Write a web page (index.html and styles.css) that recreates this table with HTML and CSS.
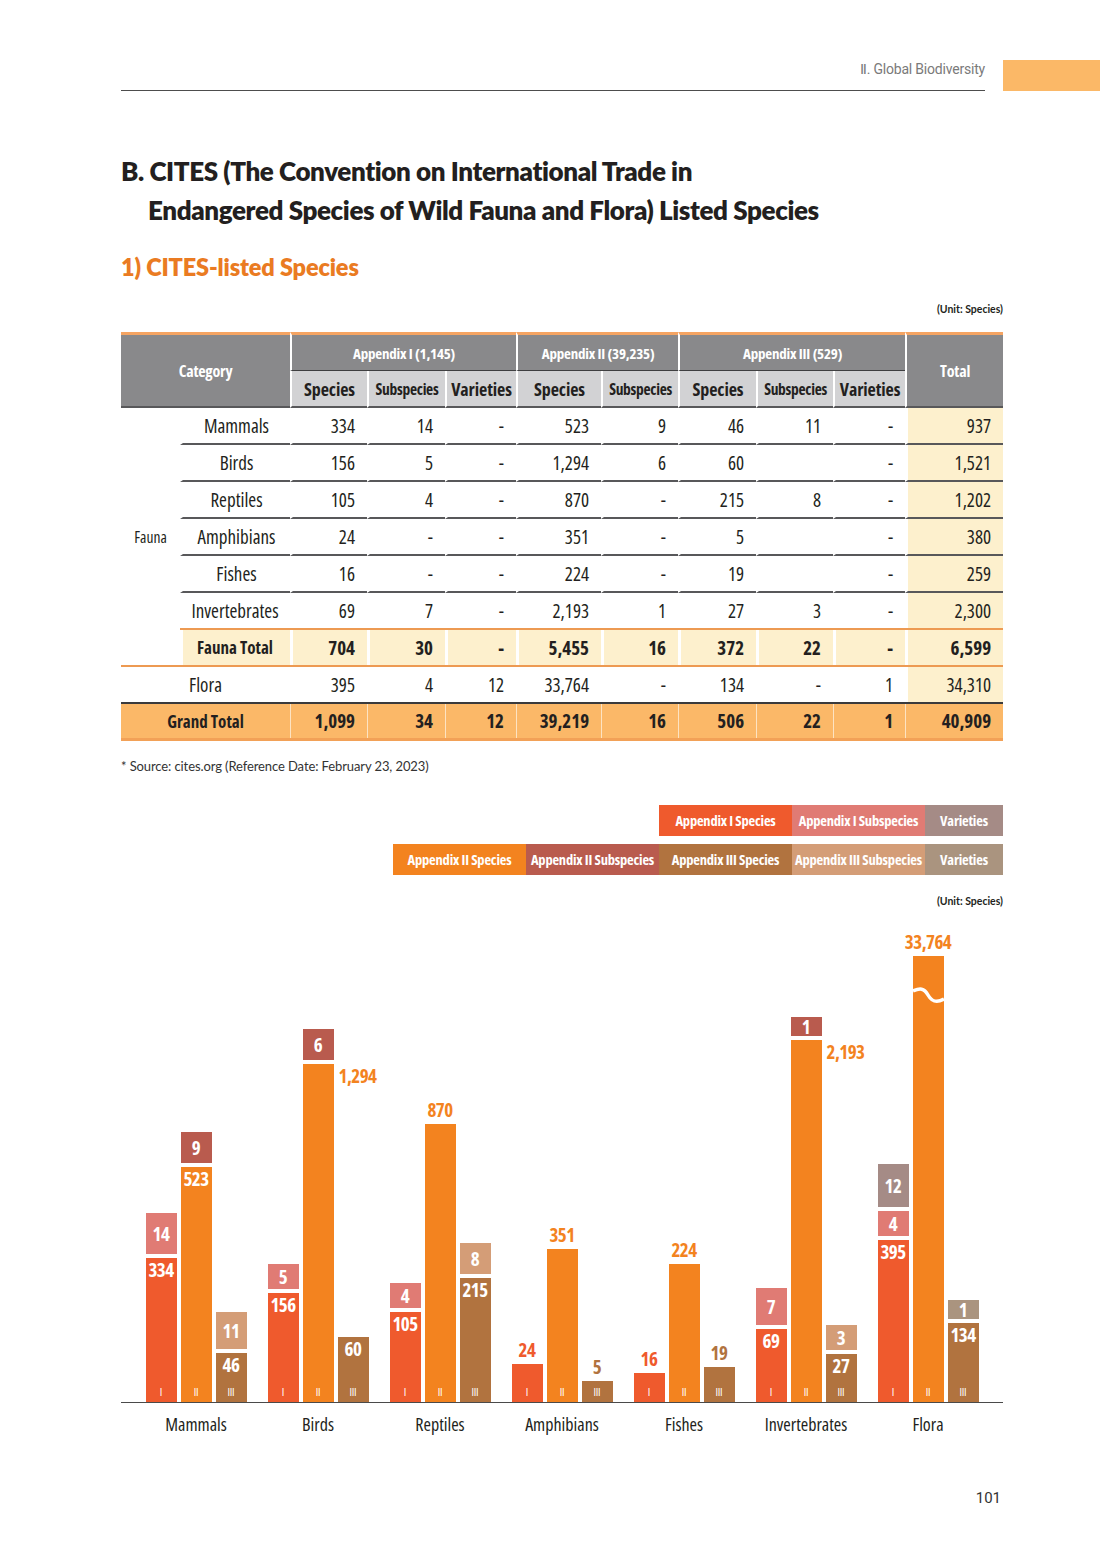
FILE: index.html
```html
<!DOCTYPE html>
<html lang="en">
<head>
<meta charset="utf-8">
<title>CITES-listed Species</title>
<link rel="stylesheet" href="styles.css">
</head>
<body>
<div class="page">
  <header class="running">
    <div class="running-rule"><span>Ⅱ. Global Biodiversity</span></div>
    <div class="tab"></div>
  </header>

  <h1 class="title"><span class="l1">B. CITES (The Convention on International Trade in</span><span class="l2">Endangered Species of Wild Fauna and Flora) Listed Species</span></h1>
  <h2 class="sub">1) CITES-listed Species</h2>

  <div class="unit">(Unit: Species)</div>

  <table class="cites">
    <colgroup>
      <col class="c-fauna"><col class="c-name"><col class="c-s1"><col class="c-ss1"><col class="c-v1"><col class="c-s2"><col class="c-ss2"><col class="c-s3"><col class="c-ss3"><col class="c-v3"><col class="c-tot">
    </colgroup>
    <thead>
      <tr class="h1">
        <th colspan="2" rowspan="2" class="cat first">Category</th>
        <th colspan="3" class="grp">Appendix I (1,145)</th>
        <th colspan="2" class="grp">Appendix II (39,235)</th>
        <th colspan="3" class="grp">Appendix III (529)</th>
        <th rowspan="2" class="cat">Total</th>
      </tr>
      <tr class="h2">
        <th>Species</th><th class="ssp">Subspecies</th><th>Varieties</th>
        <th>Species</th><th class="ssp">Subspecies</th>
        <th>Species</th><th class="ssp">Subspecies</th><th>Varieties</th>
      </tr>
    </thead>
    <tbody>
      <tr><td rowspan="7" class="fauna">Fauna</td><td class="nm">Mammals</td><td>334</td><td>14</td><td>-</td><td>523</td><td>9</td><td>46</td><td>11</td><td>-</td><td class="tc">937</td></tr>
      <tr><td class="nm">Birds</td><td>156</td><td>5</td><td>-</td><td>1,294</td><td>6</td><td>60</td><td></td><td>-</td><td class="tc">1,521</td></tr>
      <tr><td class="nm">Reptiles</td><td>105</td><td>4</td><td>-</td><td>870</td><td>-</td><td>215</td><td>8</td><td>-</td><td class="tc">1,202</td></tr>
      <tr><td class="nm">Amphibians</td><td>24</td><td>-</td><td>-</td><td>351</td><td>-</td><td>5</td><td></td><td>-</td><td class="tc">380</td></tr>
      <tr><td class="nm">Fishes</td><td>16</td><td>-</td><td>-</td><td>224</td><td>-</td><td>19</td><td></td><td>-</td><td class="tc">259</td></tr>
      <tr class="inv"><td class="nm">Invertebrates</td><td>69</td><td>7</td><td>-</td><td>2,193</td><td>1</td><td>27</td><td>3</td><td>-</td><td class="tc">2,300</td></tr>
      <tr class="ft"><td class="nm">Fauna Total</td><td>704</td><td>30</td><td>-</td><td>5,455</td><td>16</td><td>372</td><td>22</td><td>-</td><td class="tc">6,599</td></tr>
      <tr class="fl"><td colspan="2" class="nm">Flora</td><td>395</td><td>4</td><td>12</td><td>33,764</td><td>-</td><td>134</td><td>-</td><td>1</td><td class="tc">34,310</td></tr>
      <tr class="gt"><td colspan="2" class="nm">Grand Total</td><td>1,099</td><td>34</td><td>12</td><td>39,219</td><td>16</td><td>506</td><td>22</td><td>1</td><td class="tc">40,909</td></tr>
    </tbody>
  </table>

  <p class="source">* Source: cites.org (Reference Date: February 23, 2023)</p>

  <div class="legend">
    <div class="legend-row">
      <span class="lg k-s1">Appendix I Species</span>
      <span class="lg k-ss1">Appendix I Subspecies</span>
      <span class="lg k-v1 narrow">Varieties</span>
    </div>
    <div class="legend-row">
      <span class="lg k-s2">Appendix II Species</span>
      <span class="lg k-ss2">Appendix II Subspecies</span>
      <span class="lg k-s3">Appendix III Species</span>
      <span class="lg k-ss3">Appendix III Subspecies</span>
      <span class="lg k-v3 narrow">Varieties</span>
    </div>
  </div>

  <div class="unit unit2">(Unit: Species)</div>

  <div class="chart">
    <div class="plot">
      <!-- Mammals -->
      <div class="group">
        <div class="col"><div class="box k-ss1" style="height:41px">14</div><div class="bar k-s1" style="height:144px"><span class="v">334</span><span class="rn">I</span></div></div>
        <div class="col"><div class="box k-ss2" style="height:31px">9</div><div class="bar k-s2" style="height:235px"><span class="v">523</span><span class="rn">II</span></div></div>
        <div class="col"><div class="box k-ss3" style="height:37px">11</div><div class="bar k-s3" style="height:49px"><span class="v">46</span><span class="rn">III</span></div></div>
      </div>
      <!-- Birds -->
      <div class="group">
        <div class="col"><div class="box k-ss1" style="height:25px">5</div><div class="bar k-s1" style="height:109px"><span class="v">156</span><span class="rn">I</span></div></div>
        <div class="col"><div class="box k-ss2" style="height:31px">6</div><div class="bar k-s2" style="height:338px"><span class="side t-s2">1,294</span><span class="v"></span><span class="rn">II</span></div></div>
        <div class="col"><div class="bar k-s3" style="height:65px"><span class="v">60</span><span class="rn">III</span></div></div>
      </div>
      <!-- Reptiles -->
      <div class="group">
        <div class="col"><div class="box k-ss1" style="height:25px">4</div><div class="bar k-s1" style="height:90px"><span class="v">105</span><span class="rn">I</span></div></div>
        <div class="col"><span class="out t-s2">870</span><div class="bar k-s2" style="height:278px"><span class="v"></span><span class="rn">II</span></div></div>
        <div class="col"><div class="box k-ss3" style="height:31px">8</div><div class="bar k-s3" style="height:124px"><span class="v">215</span><span class="rn">III</span></div></div>
      </div>
      <!-- Amphibians -->
      <div class="group">
        <div class="col"><span class="out t-s1">24</span><div class="bar k-s1" style="height:38px"><span class="v"></span><span class="rn">I</span></div></div>
        <div class="col"><span class="out t-s2">351</span><div class="bar k-s2" style="height:153px"><span class="v"></span><span class="rn">II</span></div></div>
        <div class="col"><span class="out t-s3">5</span><div class="bar k-s3" style="height:21px"><span class="v"></span><span class="rn">III</span></div></div>
      </div>
      <!-- Fishes -->
      <div class="group">
        <div class="col"><span class="out t-s1">16</span><div class="bar k-s1" style="height:29px"><span class="v"></span><span class="rn">I</span></div></div>
        <div class="col"><span class="out t-s2">224</span><div class="bar k-s2" style="height:138px"><span class="v"></span><span class="rn">II</span></div></div>
        <div class="col"><span class="out t-s3">19</span><div class="bar k-s3" style="height:35px"><span class="v"></span><span class="rn">III</span></div></div>
      </div>
      <!-- Invertebrates -->
      <div class="group">
        <div class="col"><div class="box k-ss1" style="height:37px">7</div><div class="bar k-s1" style="height:73px"><span class="v">69</span><span class="rn">I</span></div></div>
        <div class="col"><div class="box k-ss2" style="height:19px">1</div><div class="bar k-s2" style="height:362px"><span class="side t-s2">2,193</span><span class="v"></span><span class="rn">II</span></div></div>
        <div class="col"><div class="box k-ss3" style="height:25px">3</div><div class="bar k-s3" style="height:48px"><span class="v">27</span><span class="rn">III</span></div></div>
      </div>
      <!-- Flora -->
      <div class="group">
        <div class="col"><div class="box k-v1" style="height:43px">12</div><div class="box k-ss1" style="height:25px">4</div><div class="bar k-s1" style="height:162px"><span class="v">395</span><span class="rn">I</span></div></div>
        <div class="col"><span class="out t-s2">33,764</span><div class="bar k-s2" style="height:446px"><svg class="brk" width="31" height="18" viewBox="0 0 31 18"><path d="M0 4 C 7 1, 11 1, 15 8 S 24 16, 31 12" fill="none" stroke="#fff" stroke-width="3.5"/></svg><span class="v"></span><span class="rn">II</span></div></div>
        <div class="col"><div class="box k-v3" style="height:19px">1</div><div class="bar k-s3" style="height:79px"><span class="v">134</span><span class="rn">III</span></div></div>
      </div>
    </div>
    <div class="cats">
      <span>Mammals</span><span>Birds</span><span>Reptiles</span><span>Amphibians</span><span>Fishes</span><span>Invertebrates</span><span>Flora</span>
    </div>
  </div>

  <div class="pageno">101</div>
</div>
</body>
</html>
```

FILE: styles.css
```css
:root {
  --c-s1: #ef5a2d;
  --c-ss1: #e07b74;
  --c-v1: #a58b86;
  --c-s2: #f3831f;
  --c-ss2: #b95b4e;
  --c-s3: #b1733f;
  --c-ss3: #d49d77;
  --c-v3: #aa947f;
}

* { box-sizing: border-box; margin: 0; padding: 0; }

html, body { background: #fff; }

body {
  width: 1100px;
  height: 1554px;
  overflow: hidden;
  font-family: "Lato", "Open Sans", sans-serif;
  color: #231f20;
}

.page {
  padding: 60px 97px 0 121px;
  height: 1554px;
}

/* running header */
.running {
  display: flex;
  height: 31px;
  margin-right: -97px;
}
.running-rule {
  flex: 1;
  border-bottom: 1px solid #4d4d4d;
  display: flex;
  justify-content: flex-end;
  align-items: flex-end;
  padding-bottom: 14px;
  font-family: "Roboto", sans-serif;
  font-size: 14px;
  line-height: 14px;
  color: #7a7a7a;
  letter-spacing: -0.2px;
}
.tab {
  width: 97px;
  margin-left: 18px;
  background: #fbb867;
}

/* titles */
.title {
  margin-top: 61px;
  font-family: "Lato", sans-serif;
  font-weight: 800;
  font-size: 26px;
  line-height: 39px;
  letter-spacing: -0.4px;
  color: #231f20;
}
.title span { display: block; }
.title .l2 { padding-left: 27px; }

.sub {
  margin-top: 22px;
  font-family: "Lato", sans-serif;
  font-weight: 800;
  font-size: 23.5px;
  line-height: 30px;
  letter-spacing: -0.15px;
  color: #ea7b22;
}

.unit {
  margin-top: 20px;
  text-align: right;
  font-family: "Lato", sans-serif;
  font-weight: 700;
  font-size: 10.5px;
  line-height: 14px;
  color: #231f20;
}

/* table */
.cites {
  margin-top: 16px;
  width: 882px;
  table-layout: fixed;
  border-collapse: separate;
  border-spacing: 0;
  font-family: "Open Sans", sans-serif;
  font-stretch: 75%;
  color: #231f20;
}
.c-fauna { width: 59px; }
.c-name { width: 110px; }
.c-s1 { width: 77px; }
.c-ss1 { width: 78px; }
.c-v1 { width: 71px; }
.c-s2 { width: 85px; }
.c-ss2 { width: 77px; }
.c-s3 { width: 78px; }
.c-ss3 { width: 77px; }
.c-v3 { width: 72px; }
.c-tot { width: 98px; }

.cites th {
  font-weight: 700;
  text-align: center;
  padding: 0;
  border-left: 2px solid #fff;
  white-space: nowrap;
}
.cites th.first { border-left: 0; }
.h1 th {
  height: 39px;
  border-top: 3px solid #f5a462;
  background: #89898b;
  color: #fff;
  font-size: 15px;
  letter-spacing: -0.2px;
}
.h1 th.grp { border-bottom: 1px solid #3e3e40; }
.h1 th.cat { border-bottom: 2px solid #58585a; font-size: 16px; }
.h2 th {
  height: 37px;
  background: #d2d2d4;
  color: #231f20;
  font-size: 18px;
  letter-spacing: -0.1px;
  border-bottom: 2px solid #58585a;
}
.h2 th.ssp { font-size: 15.5px; letter-spacing: -0.3px; }

.cites td {
  height: 37px;
  padding: 0 12px 0 0;
  text-align: right;
  font-size: 19px;
  font-weight: 400;
  border-left: 3px solid #fff;
  border-bottom: 2px solid #58585a;
  white-space: nowrap;
}
.cites td.nm {
  text-align: center;
  padding: 0;
}
.cites td.fauna {
  border-left: 0;
  text-align: center;
  padding: 0;
  font-size: 15.5px;
  border-bottom: 2px solid #ed9a52;
}
.cites td.tc { background: #fdf0cd; }

.cites tr.inv td {
  border-left: 0;
  box-shadow: inset 3px 0 0 #fff;
  border-bottom: 2px solid #ed9a52;
}
.cites tr.ft td {
  border-left: 0;
  box-shadow: inset 3px 0 0 #fff;
  background: #fdf0cd;
  font-weight: 700;
  border-bottom: 2px solid #ed9a52;
}
.cites tr.fl td {
  border-left: 0;
  box-shadow: inset 3px 0 0 #fff;
  border-bottom: 2px solid #3a3a3c;
}
.cites tr.gt td {
  border-left: 0;
  box-shadow: inset 1px 0 0 #fde3c2;
  background: #fbb868;
  font-weight: 700;
  border-bottom: 3px solid #f2a157;
}
.cites tr.gt td.nm { box-shadow: none; font-size: 17px; }
.cites tr.ft td.nm { font-size: 17px; }

.source {
  margin-top: 17px;
  font-family: "Lato", sans-serif;
  font-size: 13px;
  line-height: 16px;
  color: #333;
  letter-spacing: -0.1px;
}

/* legend */
.legend {
  margin-top: 31px;
  display: flex;
  flex-direction: column;
  align-items: flex-end;
  gap: 8px;
}
.legend-row { display: flex; }
.lg {
  width: 133px;
  height: 31px;
  display: flex;
  align-items: center;
  justify-content: center;
  color: #fff;
  font-family: "Open Sans", sans-serif;
  font-stretch: 75%;
  font-weight: 700;
  font-size: 14.5px;
  letter-spacing: -0.2px;
  white-space: nowrap;
  overflow: hidden;
}
.lg.narrow { width: 78px; }

.k-s1 { background: var(--c-s1); }
.k-ss1 { background: var(--c-ss1); }
.k-v1 { background: var(--c-v1); }
.k-s2 { background: var(--c-s2); }
.k-ss2 { background: var(--c-ss2); }
.k-s3 { background: var(--c-s3); }
.k-ss3 { background: var(--c-ss3); }
.k-v3 { background: var(--c-v3); }
.t-s1 { color: var(--c-s1); }
.t-s2 { color: var(--c-s2); }
.t-s3 { color: var(--c-s3); }

.unit2 { margin-top: 19px; }

/* chart */
.chart { margin-top: 24px; }
.plot {
  height: 471px;
  border-bottom: 1px solid #4a4a4a;
  display: flex;
  align-items: flex-end;
  padding: 0 14px;
}
.group {
  width: 122px;
  display: flex;
  justify-content: center;
  align-items: flex-end;
  gap: 4px;
}
.col {
  width: 31px;
  display: flex;
  flex-direction: column;
  align-items: center;
  gap: 4px;
}
.box, .bar, .out {
  font-family: "Open Sans", sans-serif;
  font-stretch: 75%;
  font-weight: 700;
}
.box, .bar {
  width: 31px;
  color: #fff;
}
.box {
  display: flex;
  align-items: center;
  justify-content: center;
  font-size: 19px;
  letter-spacing: -0.3px;
}
.bar {
  position: relative;
  display: flex;
  flex-direction: column;
  align-items: center;
  justify-content: space-between;
}
.bar .v {
  font-size: 19px;
  line-height: 20px;
  padding-top: 2px;
  letter-spacing: -0.5px;
  white-space: nowrap;
}
.bar .rn {
  font-size: 11.5px;
  line-height: 12px;
  padding-bottom: 4px;
  font-weight: 500;
  letter-spacing: -0.3px;
}
.out {
  font-size: 19px;
  line-height: 20px;
  letter-spacing: -0.5px;
  white-space: nowrap;
}
.side {
  position: absolute;
  left: 36px;
  top: 2px;
  font-size: 19px;
  line-height: 20px;
  letter-spacing: -0.5px;
  white-space: nowrap;
}
.brk {
  position: absolute;
  left: 0;
  top: 31px;
}

.cats {
  display: flex;
  padding: 0 14px;
  margin-top: 11px;
}
.cats span {
  width: 122px;
  text-align: center;
  font-family: "Open Sans", sans-serif;
  font-stretch: 75%;
  font-size: 18px;
  line-height: 20px;
  color: #231f20;
}

.pageno {
  margin-top: 55px;
  text-align: right;
  padding-right: 2px;
  font-family: "Roboto", sans-serif;
  font-size: 15px;
  line-height: 18px;
  color: #333;
}
```
